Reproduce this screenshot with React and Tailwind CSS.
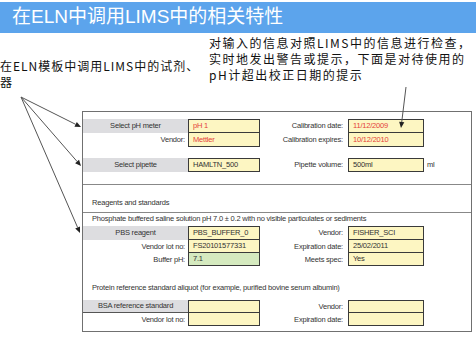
import clsx from "clsx";

const narrow = "font-['Liberation_Sans_Narrow','Liberation_Sans',sans-serif]";
const cjk = "font-['Liberation_Sans','Noto_Sans_CJK_SC',sans-serif]";

// arrow line with a small filled head at (x2, y2)
const Arrow = ({ x1, y1, x2, y2 }) => {
  const a = Math.atan2(y2 - y1, x2 - x1);
  const len = 6;
  const w = 2.6;
  const bx = x2 - len * Math.cos(a);
  const by = y2 - len * Math.sin(a);
  const px = -Math.sin(a) * w;
  const py = Math.cos(a) * w;
  return (
    <g>
      <line x1={x1} y1={y1} x2={bx} y2={by} stroke="#555" strokeWidth="1" />
      <polygon
        points={`${x2},${y2} ${bx + px},${by + py} ${bx - px},${by - py}`}
        fill="#222"
      />
    </g>
  );
};

const Field = ({ children, first, green, red, w }) => (
  <div
    className={clsx(
      "h-full border-x border-b border-[#3a3a3a] pl-[4px] flex items-center",
      first && "border-t",
      green ? "bg-[#d5eabf]" : "bg-[#fdf6c2]",
      red ? "text-[#e4413a]" : "text-[#333]",
      w
    )}
  >
    {children}
  </div>
);

const Row = ({ h = "h-[14px]", gray, label, value, first, green, red, rLabel, rValue, rRed, unit, line }) => (
  <div className={clsx("flex", h)}>
    {gray ? (
      <div
        className={clsx(
          "w-[105px] bg-[#dddde0] flex items-center justify-center text-[#333]",
          line && "border-b border-[#555]"
        )}
      >
        {gray}
      </div>
    ) : (
      <div className="w-[105px] flex items-center justify-end pr-[3px] text-[#333]">{label}</div>
    )}
    <Field first={first} green={green} red={red} w="w-[72px]">
      {value}
    </Field>
    {rLabel !== undefined && (
      <>
        <div className="w-[88px] flex items-center justify-end pr-[5px] text-[#333]">{rLabel}</div>
        <Field first={first} red={rRed} w="w-[76px]">
          {rValue}
        </Field>
        {unit && <div className="pl-[3px] flex items-center text-[#333]">{unit}</div>}
      </>
    )}
  </div>
);

export default function App() {
  return (
    <div className="relative w-[476px] h-[337px] overflow-hidden bg-white">
      <div className={clsx("mt-[2px] h-[31px] bg-[#5ca4ec] pl-[12px] flex items-center text-[19px] text-white", cjk)}>
        在ELN中调用LIMS中的相关特性
      </div>

      <div className="flex h-[78px] text-[12px] leading-[16px] text-[#111] font-['Noto_Sans_CJK_SC',sans-serif]">
        <div className="w-[209px] shrink-0 whitespace-nowrap pt-[25px] tracking-[1px]">
          在ELN模板中调用LIMS中的试剂、
          <br />器
        </div>
        <div className="pt-[2px] tracking-[1.5px] whitespace-nowrap">
          对输入的信息对照LIMS中的信息进行检查，
          <br />
          实时地发出警告或提示，下面是对待使用的
          <br />
          pH计超出校正日期的提示
        </div>
      </div>

      <div
        className={clsx(
          "ml-[82px] w-[390px] h-[221px] border border-[#707070] pt-[7px] text-[7.5px] leading-[10px] tracking-[-0.2px]",
          narrow
        )}
      >
        <Row gray="Select pH meter" value="pH 1" first red rLabel="Calibration date:" rValue="11/12/2009" rRed />
        <Row label="Vendor:" value="Mettler" red rLabel="Calibration expires:" rValue="10/12/2010" rRed />
        <div className="mt-[11px]">
          <Row gray="Select pipette" value="HAMLTN_500" first rLabel="Pipette volume:" rValue="500ml" unit="ml" />
        </div>
        <div className="mt-[12px] border-t border-[#888] h-[28px] pt-[13px] pl-[9px] text-[#333]">
          Reagents and standards
        </div>
        <div className="border-t border-[#888] pt-[1px] pl-[9px] text-[#333]">
          Phosphate buffered saline solution pH 7.0 ± 0.2 with no visible particulates or sediments
        </div>
        <div className="mt-[2px]">
          <Row gray="PBS reagent" value="PBS_BUFFER_0" first rLabel="Vendor:" rValue="FISHER_SCI" />
          <Row h="h-[13px]" label="Vendor lot no:" value="FS20101577331" rLabel="Expiration date:" rValue="25/02/2011" />
          <Row h="h-[13px]" label="Buffer pH:" value="7.1" green rLabel="Meets spec:" rValue="Yes" />
        </div>
        <div className="mt-[17px] pl-[9px] text-[#333]">
          Protein reference standard aliquot (for example, purified bovine serum albumin)
        </div>
        <div className="mt-[7px]">
          <Row h="h-[13px]" gray="BSA reference standard" line value="" first rLabel="Vendor:" rValue="" />
          <Row h="h-[13px]" label="Vendor lot no:" value="" rLabel="Expiration date:" rValue="" />
        </div>
      </div>

      <svg className="absolute inset-0 pointer-events-none" width="476" height="337">
        <Arrow x1={21} y1={97} x2={81} y2={127} />
        <Arrow x1={21} y1={97} x2={81} y2={166} />
        <Arrow x1={21} y1={97} x2={80} y2={233} />
        <Arrow x1={406} y1={87} x2={401} y2={128} />
      </svg>
    </div>
  );
}
